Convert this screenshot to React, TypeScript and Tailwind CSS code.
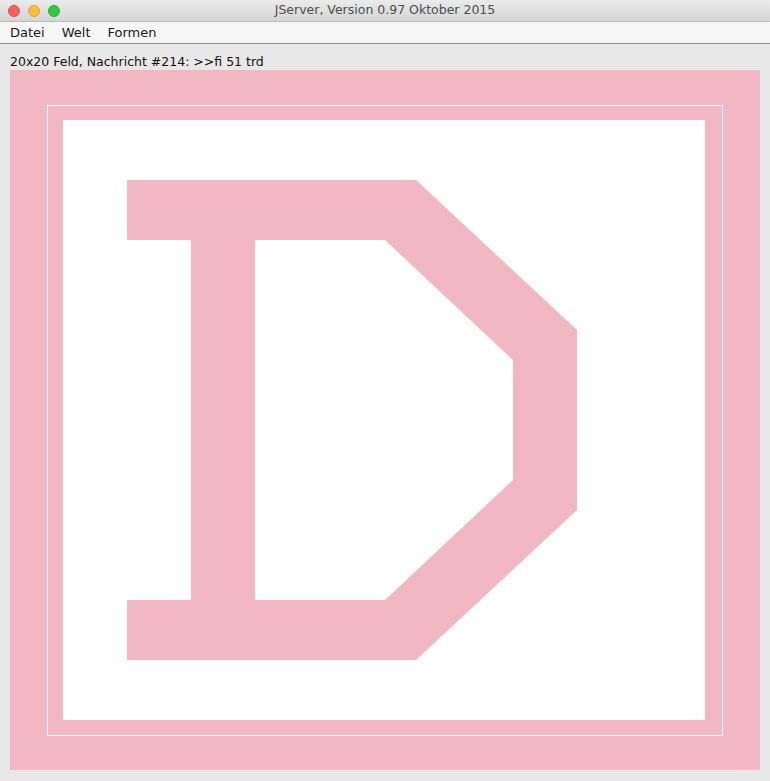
import React from 'react';

const PINK = '#f1b7c2';

function TrafficLights() {
  return (
    <div className="flex items-center gap-[8px] pl-[8px]">
      <span className="block w-[12px] h-[12px] rounded-full bg-[#fc605c] border border-[#de4a46]" />
      <span className="block w-[12px] h-[12px] rounded-full bg-[#fdbc40] border border-[#de9f34]" />
      <span className="block w-[12px] h-[12px] rounded-full bg-[#34c84a] border border-[#27aa35]" />
    </div>
  );
}

// the board is a 20x20 grid canvas; shape is drawn in cell units
function Letter() {
  const outer = '64,60 353,60 514,210 514,390 353,540 64,540 64,480 128,480 128,120 64,120';
  const inner = '192,120 322,120 450,240 450,360 322,480 192,480';
  const toPath = (pts: string) => 'M' + pts.split(' ').join(' L') + ' Z';
  return (
    <svg width="642" height="600" viewBox="0 0 642 600" className="block">
      <path d={toPath(outer) + ' ' + toPath(inner)} fill={PINK} fillRule="evenodd" />
    </svg>
  );
}

export default function App() {
  return (
    <div
      className="w-[770px] h-[781px] bg-[#e8e8e8] flex flex-col overflow-hidden"
      style={{ fontFamily: '"DejaVu Sans", Verdana, sans-serif' }}
    >
      {/* title bar */}
      <div className="relative h-[22px] flex items-center bg-gradient-to-b from-[#ebebeb] to-[#d5d5d5] border-b border-[#b9b9b9]">
        <TrafficLights />
        <div className="absolute inset-0 flex items-center justify-center text-[12.5px] text-[#4d4d4d]">
          JServer, Version 0.97 Oktober 2015
        </div>
      </div>

      {/* menu bar */}
      <div className="h-[22px] flex items-center gap-[17px] pl-[10px] bg-[#f6f6f6] border-b border-[#8e8e8e] text-[13px] text-[#1a1a1a]">
        <span>Datei</span>
        <span>Welt</span>
        <span>Formen</span>
      </div>

      <div className="h-[26px] pl-[10px] pt-[10px] text-[12.5px] leading-[15px] text-[#111]">
        20x20 Feld, Nachricht #214: &gt;&gt;fi 51 trd
      </div>

      <div className="ml-[10px] w-[750px] h-[700px] bg-[#f1b7c2] pl-[37px] pt-[35px]">
        <div className="w-[676px] h-[631px] border border-white pl-[15px] pt-[14px]">
          <div className="w-[642px] h-[600px] bg-white">
            <Letter />
          </div>
        </div>
      </div>
    </div>
  );
}
